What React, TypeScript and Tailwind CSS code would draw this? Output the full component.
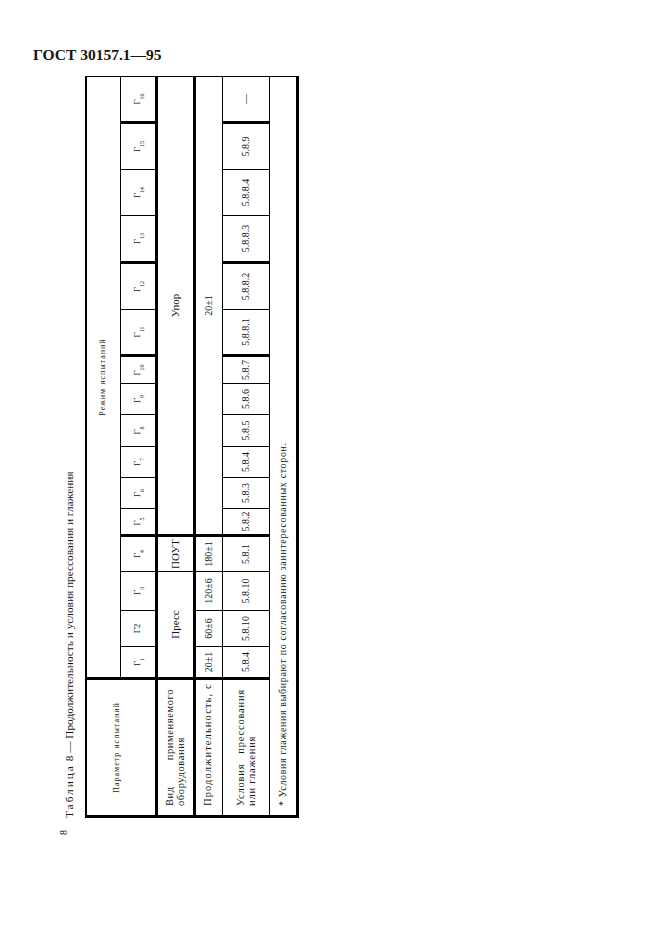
import React from 'react';

const COLS = [32, 36, 39, 36, 27, 31, 31, 32, 31, 28, 46, 47, 47, 46, 47, 46];
const CONDITIONS = ['5.8.4', '5.8.10', '5.8.10', '5.8.1', '5.8.2', '5.8.3', '5.8.4', '5.8.5', '5.8.6', '5.8.7', '5.8.8.1', '5.8.8.2', '5.8.8.3', '5.8.8.4', '5.8.9', '—'];
// thick vertical rule after Г4, Г10, Г12, Г15
const THICK = [3, 9, 11, 14];

function Mode({ n }: { n: number }) {
  if (n === 2) return <span>Г2</span>;
  return (
    <span>
      Г<sub className="text-[6px] align-[-2px]">{n}</sub>
    </span>
  );
}

export default function App() {
  const cell = 'border border-black p-0 text-center align-middle';
  return (
    <div className="w-[661px] h-[936px] bg-white overflow-hidden text-[#141414] font-['Liberation_Serif',serif]">
      <div className="pt-[47px] pl-[33px] text-[15.5px] leading-none font-bold">ГОСТ 30157.1—95</div>

      {/* landscape table, turned to read bottom-to-top */}
      <div className="mt-[15px] ml-[55px] w-[243px] h-[760px]">
        <div className="w-[760px] h-[243px] origin-top-left -rotate-90 translate-y-[760px]">
          <div className="flex items-start h-[30px]">
            <span className="ml-[3px] mt-[4px] w-[17px] text-[10px] leading-none">8</span>
            <span className="mt-[9px] text-[11.3px] leading-none whitespace-nowrap">
              <span className="tracking-[2px]">Таблица</span> 8 — Продолжительность и условия прессования и глажения
            </span>
          </div>

          <table className="ml-[20px] w-[740px] table-fixed border-collapse border-t-2 border-l-[3px] border-b-[3px] border-black text-[10px] leading-none">
            <colgroup>
              <col style={{ width: 138 }} />
              {COLS.map((w, i) => (
                <col key={i} style={{ width: w }} />
              ))}
            </colgroup>
            <tbody>
              <tr className="h-[34px]">
                <td rowSpan={2} className={`${cell} border-r-[3px] border-b-[3px] text-[8px] tracking-[1px] pb-[8px]`}>
                  Параметр испытаний
                </td>
                <td colSpan={16} className={`${cell} text-[8px] tracking-[1px]`}>
                  Режим испытаний
                </td>
              </tr>
              <tr className="h-[36px]">
                {COLS.map((_, i) => (
                  <td key={i} className={`${cell} border-b-[3px] text-[9px] ${THICK.includes(i) ? 'border-r-[3px]' : ''}`}>
                    <Mode n={i + 1} />
                  </td>
                ))}
              </tr>
              <tr className="h-[38px]">
                <td className={`${cell} border-r-[3px] border-b-[3px] px-[9px] text-left text-[10.5px] leading-[11px] tracking-[0.6px]`}>
                  <div className="text-justify [text-align-last:justify]">Вид применяемого</div>
                  <div>оборудования</div>
                </td>
                <td colSpan={3} className={`${cell} border-b-[3px] text-[11px]`}>
                  Пресс
                </td>
                <td className={`${cell} border-b-[3px] border-r-[3px] text-[11px]`}>ПОУТ</td>
                <td colSpan={12} className={`${cell} border-b-[3px] text-[11px]`}>
                  Упор
                </td>
              </tr>
              <tr className="h-[28px]">
                <td className={`${cell} border-r-[3px] px-[9px] text-[10.5px] tracking-[1.1px] whitespace-nowrap text-justify [text-align-last:justify]`}>
                  Продолжительность, с
                </td>
                <td className={cell}>20±1</td>
                <td className={cell}>60±6</td>
                <td className={cell}>120±6</td>
                <td className={`${cell} border-r-[3px]`}>180±1</td>
                <td colSpan={12} className={cell}>
                  20±1
                </td>
              </tr>
              <tr className="h-[47px]">
                <td className={`${cell} border-r-[3px] px-[9px] text-left text-[10.5px] leading-[11px] tracking-[0.8px]`}>
                  <div className="text-justify [text-align-last:justify]">Условия прессования</div>
                  <div>или глажения</div>
                </td>
                {CONDITIONS.map((c, i) => (
                  <td key={i} className={`${cell} ${THICK.includes(i) ? 'border-r-[3px]' : ''}`}>
                    {c}
                  </td>
                ))}
              </tr>
              <tr className="h-[28px]">
                <td colSpan={17} className={`${cell} text-left pl-[9px] tracking-[0.65px]`}>
                  * Условия глажения выбирают по согласованию заинтересованных сторон.
                </td>
              </tr>
            </tbody>
          </table>
        </div>
      </div>
    </div>
  );
}
